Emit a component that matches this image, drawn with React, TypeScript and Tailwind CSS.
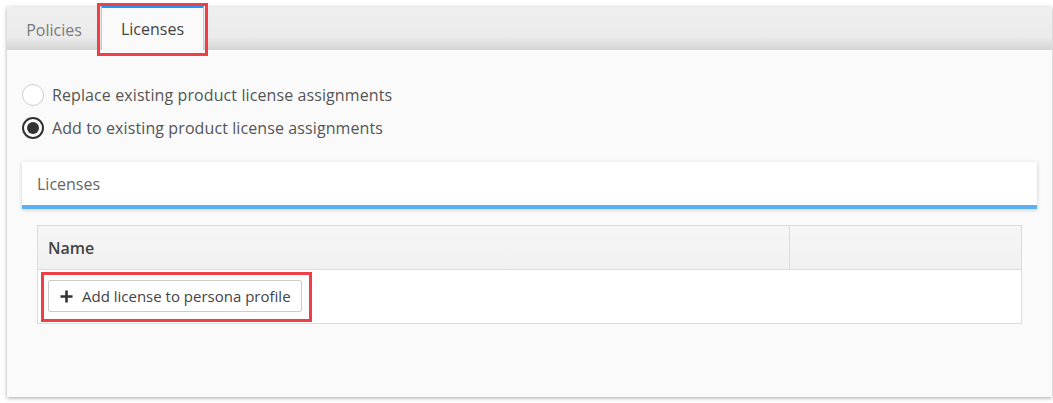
import { useState } from "react";

const font = { fontFamily: '"Open Sans", "Liberation Sans", sans-serif' };

const options = [
  { id: "replace", label: "Replace existing product license assignments" },
  { id: "add", label: "Add to existing product license assignments" },
];

function Radio({ checked }: { checked: boolean }) {
  return checked ? (
    <span className="flex h-[22px] w-[22px] items-center justify-center rounded-full border-2 border-[#333] bg-white">
      <span className="h-[12px] w-[12px] rounded-full bg-[#333]" />
    </span>
  ) : (
    <span className="h-[22px] w-[22px] rounded-full border border-[#cfcfcf] bg-white" />
  );
}

export default function App() {
  const [mode, setMode] = useState("add");

  return (
    <div className="h-[403px] w-[1053px] bg-white pl-[7px] pt-[7px]" style={font}>
      <div className="flex h-[390px] w-[1045px] flex-col bg-[#fafafa] shadow-[0_1px_4px_rgba(0,0,0,0.35)]">
        {/* Tab bar */}
        <div className="flex h-[43px] shrink-0 items-stretch bg-linear-to-b from-[#efefef] via-[#ebebeb] via-70% to-[#d4d4d4]">
          <button className="w-[94px] pt-[2px] text-[16px] text-[#7a7a7a]">Policies</button>
          <div className="relative">
            <button className="-mt-[2px] h-[45px] w-[103px] border-x border-[#c8c8c8] border-t-[3px] border-t-[#2196f3] bg-[#fafafa] text-[16px] text-[#444]">
              Licenses
            </button>
            <span className="pointer-events-none absolute -left-[4px] -top-[4px] h-[53px] w-[111px] border-[3px] border-[#f03e45]" />
          </div>
        </div>

        {/* Content */}
        <div className="flex flex-col px-[15px] pt-[34px]">
          <div className="flex flex-col gap-[11px]">
            {options.map((o) => (
              <label
                key={o.id}
                onClick={() => setMode(o.id)}
                className="flex h-[22px] cursor-pointer items-center gap-[8px] text-[16px] tracking-[0.1px] text-[#555]"
              >
                <Radio checked={mode === o.id} />
                <span>{o.label}</span>
              </label>
            ))}
          </div>

          <div className="mt-[23px] flex h-[47px] items-center border-b-4 border-[#5aaff5] bg-white pl-[15px] text-[16px] text-[#666] shadow-[0_1px_4px_rgba(0,0,0,0.18)]">
            Licenses
          </div>

          <div className="mx-[15px] mt-[16px] border border-[#dcdcdc]">
            <div className="flex h-[44px] border-b border-[#dcdcdc] bg-linear-to-b from-[#f6f6f6] to-[#f1f1f1]">
              <div className="flex w-[752px] items-center border-r border-[#dcdcdc] pl-[10px] text-[16px] font-semibold text-[#444]">
                Name
              </div>
              <div className="flex-1" />
            </div>
            <div className="h-[53px] bg-white pl-[10px] pt-[10px]">
              <div className="relative inline-block">
                <button className="flex h-[32px] w-[254px] items-center gap-[9px] rounded-[2px] border border-[#cccccc] bg-white pl-[11px] text-[15px] text-[#444]">
                  <svg width="13" height="13" viewBox="0 0 13 13">
                    <path d="M6.5 0.5v12M0.5 6.5h12" stroke="#333" strokeWidth="2.6" />
                  </svg>
                  Add license to persona profile
                </button>
                <span className="pointer-events-none absolute -left-[7px] -top-[8px] h-[50px] w-[271px] border-[3px] border-[#f03e45]" />
              </div>
            </div>
          </div>
        </div>
      </div>
    </div>
  );
}
